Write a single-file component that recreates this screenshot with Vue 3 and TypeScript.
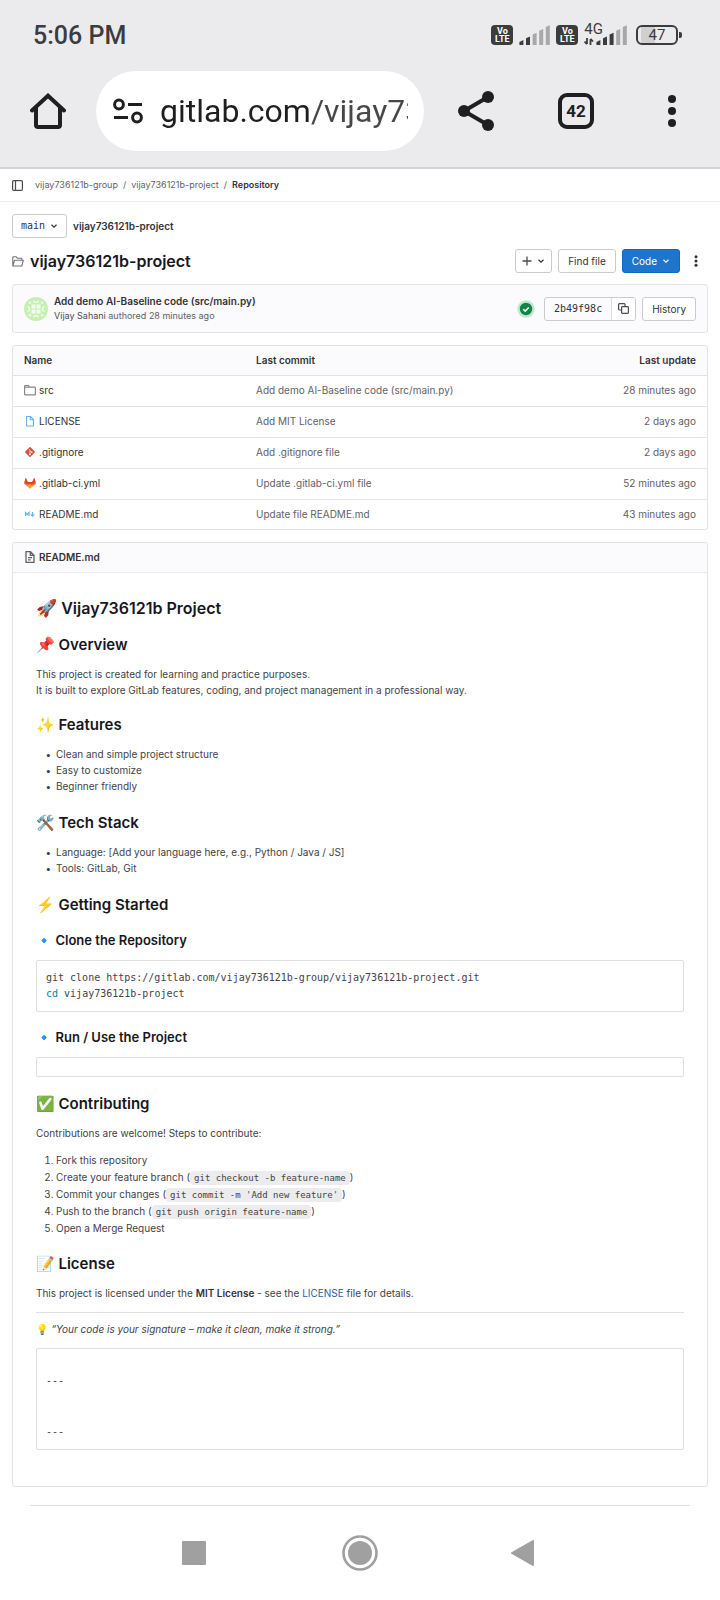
<script setup lang="ts">
import { ref } from 'vue'

interface FileRow {
  name: string
  icon: 'folder' | 'doc' | 'git' | 'gitlab' | 'markdown'
  commit: string
  updated: string
}

const address = ref('gitlab.com/vijay736121b-group/vijay736121b-project')

const files: FileRow[] = [
  { name: 'src', icon: 'folder', commit: 'Add demo AI-Baseline code (src/main.py)', updated: '28 minutes ago' },
  { name: 'LICENSE', icon: 'doc', commit: 'Add MIT License', updated: '2 days ago' },
  { name: '.gitignore', icon: 'git', commit: 'Add .gitignore file', updated: '2 days ago' },
  { name: '.gitlab-ci.yml', icon: 'gitlab', commit: 'Update .gitlab-ci.yml file', updated: '52 minutes ago' },
  { name: 'README.md', icon: 'markdown', commit: 'Update file README.md', updated: '43 minutes ago' },
]

const features = ['Clean and simple project structure', 'Easy to customize', 'Beginner friendly']
const stack = ['Language: [Add your language here, e.g., Python / Java / JS]', 'Tools: GitLab, Git']
const steps: { text: string; code?: string }[] = [
  { text: 'Fork this repository' },
  { text: 'Create your feature branch', code: 'git checkout -b feature-name' },
  { text: 'Commit your changes', code: "git commit -m 'Add new feature'" },
  { text: 'Push to the branch', code: 'git push origin feature-name' },
  { text: 'Open a Merge Request' },
]
const cloneLine = 'git clone https://gitlab.com/vijay736121b-group/vijay736121b-project.git\n'
const trailer = '\n---\n\n\n---'
const signals = [2, 3]
</script>

<template>
  <div class="screen">
    <header class="chrome">
      <div class="status">
        <span class="time">5:06 PM</span>
        <div class="indicators">
          <template v-for="(bars, n) in signals" :key="n">
            <span class="volte"><span>Vo</span><span>LTE</span></span>
            <span v-if="n === 1" class="network">
              <span>4G</span>
              <svg width="10" height="7" viewBox="0 0 10 7"><path d="M3 0v6M.5 3.500 3 6.200M6.500 7V1M6.500.8 9 3.500" /></svg>
            </span>
            <svg class="signal" :class="{ tight: n === 1 }" width="31" height="20" viewBox="0 0 31 20">
              <path v-for="i in 5" :key="i" :class="{ on: i <= bars }" :d="`M${(i - 1) * 6.6 + 0.4} 20v${-(i * 3.700 - 0.600)}l4-1.800v${i * 3.700 + 1.200}z`" />
            </svg>
          </template>
          <span class="battery"><span class="cell">47</span><span class="tip"></span></span>
        </div>
      </div>
      <div class="toolbar">
        <button class="bare" aria-label="Home">
          <svg width="36" height="36" viewBox="0 0 36 36" fill="none" stroke="#1f1f1f" stroke-width="4"><path stroke-linecap="round" d="M2 17.500 18 2.700l16 14.800" /><path stroke-linejoin="round" d="M6 14v18a2 2 0 0 0 2 2h20a2 2 0 0 0 2-2V14" /></svg>
        </button>
        <div class="omnibox">
          <svg width="30" height="26" viewBox="0 0 30 26" fill="none" stroke="#1f1f1f" stroke-width="3"><circle cx="6" cy="6.500" r="4.400" /><path d="M15 6.500h14M1 19.500h14" /><circle cx="24" cy="19.500" r="4.400" /></svg>
          <input v-model="address" type="text" aria-label="Address" />
        </div>
        <div class="actions">
          <button class="bare" aria-label="Share">
            <svg width="36" height="40" viewBox="0 0 36 40" fill="#1f1f1f"><path d="M30 6 6 20l24 14" fill="none" stroke="#1f1f1f" stroke-width="4" /><circle cx="30" cy="6" r="6" /><circle cx="6" cy="20" r="6" /><circle cx="30" cy="34" r="6" /></svg>
          </button>
          <button class="tabs" aria-label="Tabs">42</button>
          <button class="bare" aria-label="Menu">
            <svg width="8" height="32" viewBox="0 0 8 32" fill="#1f1f1f"><circle cx="4" cy="4" r="4" /><circle cx="4" cy="16" r="4" /><circle cx="4" cy="28" r="4" /></svg>
          </button>
        </div>
      </div>
    </header>

    <nav class="crumbs">
      <button class="bare" aria-label="Toggle sidebar">
        <svg width="11" height="11" viewBox="0 0 11 11" fill="none" stroke="#4c4b51"><rect x=".6" y=".6" width="9.800" height="9.800" rx="1.200" stroke-width="1.200" /><path d="M3.500.6v9.800" stroke-width="1.200" /></svg>
      </button>
      <a href="#">vijay736121b-group</a><span>/</span><a href="#">vijay736121b-project</a><span>/</span><b>Repository</b>
    </nav>

    <main>
      <div class="branch">
        <button class="btn mono">main<svg class="chev" viewBox="0 0 8 8"><path d="M1.500 2.800 4 5.200l2.500-2.400" /></svg></button>
        <b>vijay736121b-project</b>
      </div>

      <div class="title">
        <svg width="12" height="11" viewBox="0 0 12 11" fill="none" stroke="#737278"><path d="M.8 10V1.500a.7.7 0 0 1 .7-.7h2.700l1.200 1.400h3.800a.7.7 0 0 1 .7.700v1.300M.8 10l1.700-5.700h8.800L9.800 10z" stroke-width="1.100" stroke-linejoin="round" /></svg>
        <h1>vijay736121b-project</h1>
        <button class="btn slim" aria-label="Add to tree"><svg width="10" height="10" viewBox="0 0 10 10" fill="none" stroke="#4c4b51" stroke-width="1.300"><path d="M5 .5v9M.5 5h9" /></svg><svg class="chev" viewBox="0 0 8 8"><path d="M1.500 2.800 4 5.200l2.500-2.400" /></svg></button>
        <button class="btn">Find file</button>
        <button class="btn primary">Code<svg class="chev" viewBox="0 0 8 8"><path d="M1.500 2.800 4 5.200l2.500-2.400" /></svg></button>
        <button class="bare kebab" aria-label="Actions"><svg width="4" height="12" viewBox="0 0 4 12" fill="#333238"><circle cx="2" cy="1.700" r="1.500" /><circle cx="2" cy="6" r="1.500" /><circle cx="2" cy="10.300" r="1.500" /></svg></button>
      </div>

      <section class="commit">
        <svg width="24" height="24" viewBox="0 0 24 24"><circle cx="12" cy="12" r="12" fill="#c6f0b2" /><path fill="#f4faf1" d="M7.500 7.500h4v4h-4zM12.500 7.500h4v4h-4zM7.500 12.500h4v4h-4zM12.500 12.500h4v4h-4zM9 3l3 2 3-2-1 3h-4zM9 21l3-2 3 2-1-3h-4zM3 9l2 3-2 3 3-1v-4zM21 9l-2 3 2 3-3-1v-4zM4 6l3-2v3zM20 6l-3-2v3zM4 18l3 2v-3zM20 18l-3 2v-3z" /></svg>
        <div class="who">
          <a href="#" class="subject">Add demo AI-Baseline code (src/main.py)</a>
          <p><a href="#">Vijay Sahani</a> authored 28 minutes ago</p>
        </div>
        <svg width="18" height="18" viewBox="0 0 18 18" role="img" aria-label="Pipeline passed"><circle cx="9" cy="9" r="8.700" fill="#c3e6cd" /><circle cx="9" cy="9" r="6.200" fill="#108548" /><path d="m6.200 9.200 2 1.900 3.500-3.600" fill="none" stroke="#fff" stroke-width="1.500" /></svg>
        <div class="sha">
          <span class="mono">2b49f98c</span>
          <button aria-label="Copy commit SHA"><svg width="11" height="11" viewBox="0 0 11 11" fill="none" stroke="#4c4b51" stroke-width="1.200"><rect x="3.600" y="3.600" width="6.800" height="6.800" rx=".8" /><path d="M3.600 7H1.400a.8.800 0 0 1-.8-.8V1.400a.8.800 0 0 1 .8-.8h4.800a.8.800 0 0 1 .8.800v2.200" /></svg></button>
        </div>
        <button class="btn">History</button>
      </section>

      <div class="tree">
        <table>
          <thead><tr><th>Name</th><th>Last commit</th><th>Last update</th></tr></thead>
          <tbody>
            <tr v-for="f in files" :key="f.name">
              <td>
                <a href="#" class="file">
                  <svg width="12" height="12" viewBox="0 0 12 12" fill="none">
                    <path v-if="f.icon === 'folder'" d="M.6 10.200V2.200a.7.700 0 0 1 .7-.7h3l1.300 1.700h5.100a.7.700 0 0 1 .7.700v6.300a.6.600 0 0 1-.6.600H1.200a.6.600 0 0 1-.6-.6zM.6 3.200h5" stroke="#89888d" stroke-width="1.200" />
                    <path v-if="f.icon === 'doc'" d="M2.500 1.500h4L9.500 4.500v6.500h-7zM6.300 1.500v3.200h3.200" stroke="#63b3ee" stroke-width="1.100" />
                    <template v-if="f.icon === 'git'"><rect x="2.300" y="2.300" width="7.400" height="7.400" rx=".7" transform="rotate(45 6 6)" fill="#dd4c35" /><path d="M4.800 3 6 4.300v4M6.200 4.700 7.700 6.200" stroke="#fff" stroke-width=".7" /><circle cx="6" cy="8.300" r=".9" fill="#fff" /><circle cx="7.800" cy="6.200" r=".8" fill="#fff" /></template>
                    <template v-if="f.icon === 'gitlab'"><path fill="#fc6d26" d="M0 6.400 1.800.8l2 4.200h4.400l2-4.200L12 6.400 6 11.600z" /><path fill="#e24329" d="M.3 5.500 1.800.8 3.800 5h4.400l2-4.200 1.500 4.700L6 8.600z" /><path fill="#fca326" d="m2.700 8.700 3.300-2 3.300 2L6 11.600z" /></template>
                    <path v-if="f.icon === 'markdown'" d="M1.500 8V4.500L3.300 6.600 5 4.500V8M8.500 4v4M6.800 6.300l1.700 1.900 1.700-1.900" stroke="#63b3ee" stroke-width="1.200" />
                  </svg>{{ f.name }}
                </a>
              </td>
              <td><a href="#">{{ f.commit }}</a></td>
              <td>{{ f.updated }}</td>
            </tr>
          </tbody>
        </table>
      </div>

      <article class="readme">
        <div class="bar">
          <svg width="12" height="12" viewBox="0 0 12 12" fill="none" stroke="#626168" stroke-width="1.300"><path d="M2 .7h4.500L10 4.200v7.100H2zM6.300.7v3.700H10M4 6.600h4M4 8.800h2.600" /></svg>
          <b>README.md</b>
        </div>
        <div class="doc">
          <h1><span class="emoji">🚀</span> Vijay736121b Project</h1>
          <h2><span class="emoji">📌</span> Overview</h2>
          <p>This project is created for learning and practice purposes.<br />It is built to explore GitLab features, coding, and project management in a professional way.</p>
          <h2><span class="emoji">✨</span> Features</h2>
          <ul><li v-for="t in features" :key="t">{{ t }}</li></ul>
          <h2><span class="emoji">🛠️</span> Tech Stack</h2>
          <ul><li v-for="t in stack" :key="t">{{ t }}</li></ul>
          <h2><span class="emoji">⚡</span> Getting Started</h2>
          <h3><span class="emoji">🔹</span> Clone the Repository</h3>
          <pre><code>{{ cloneLine }}<span class="builtin">cd</span> vijay736121b-project</code></pre>
          <h3><span class="emoji">🔹</span> Run / Use the Project</h3>
          <pre><code></code></pre>
          <h2><span class="emoji">✅</span> Contributing</h2>
          <p>Contributions are welcome! Steps to contribute:</p>
          <ol>
            <li v-for="s in steps" :key="s.text">{{ s.text }}<template v-if="s.code"> (<code>{{ s.code }}</code>)</template></li>
          </ol>
          <h2><span class="emoji">📝</span> License</h2>
          <p>This project is licensed under the <b>MIT License</b> - see the <a href="#">LICENSE</a> file for details.</p>
          <hr />
          <p><span class="emoji">💡</span> <em>“Your code is your signature – make it clean, make it strong.”</em></p>
          <pre class="trailer"><code>{{ trailer }}</code></pre>
        </div>
      </article>
      <hr class="end" />
    </main>

    <footer class="sysnav">
      <button class="bare" aria-label="Recent apps"><svg width="36" height="36" viewBox="0 0 36 36" fill="#a0a0a0"><rect x="6" y="6" width="24" height="24" rx="1" /></svg></button>
      <button class="bare" aria-label="Home screen"><svg width="36" height="36" viewBox="0 0 36 36" fill="#a0a0a0"><circle cx="18" cy="18" r="12" /><circle cx="18" cy="18" r="16.500" fill="none" stroke="#a0a0a0" stroke-width="2.600" /></svg></button>
      <button class="bare" aria-label="Back"><svg width="36" height="36" viewBox="0 0 36 36" fill="#a0a0a0" stroke="#a0a0a0" stroke-width="2" stroke-linejoin="round"><path d="M4 18 25 6v24z" /></svg></button>
    </footer>
  </div>
</template>

<style>
body { background: #fff; }
</style>

<style scoped>
* { box-sizing: border-box; }
.screen { min-height: 100vh; display: flex; flex-direction: column; font: 10px/16px Inter, "Liberation Sans", sans-serif; color: #4c4b51; }
svg { display: block; flex: none; }
a { color: inherit; text-decoration: none; }
b { font-weight: 600; color: #333238; }
button { font: inherit; color: #333238; margin: 0; cursor: pointer; }
.bare { border: 0; background: none; padding: 0; display: flex; }
.mono, code { font-family: "DejaVu Sans Mono", "Liberation Mono", monospace; }

.chrome { background: #ebebed; border-bottom: 2px solid #d3d3d5; font-family: Roboto, sans-serif; padding-bottom: 16px; }
.status { display: flex; justify-content: space-between; align-items: center; height: 71px; padding: 0 38px 0 33px; }
.time { font-size: 25px; line-height: 32px; font-weight: 500; color: #3c3c3e; }
.indicators { display: flex; align-items: flex-end; gap: 6px; height: 22px; margin-bottom: 4px; }
.volte { width: 22px; height: 20px; border-radius: 4px; background: #3c3c3c; color: #fff; font: 700 9px/8px Roboto, sans-serif; padding: 2px 0; display: flex; flex-direction: column; align-items: center; }
.signal path { fill: #a8a8aa; }
.signal .on { fill: #3c3c3c; }
.signal.tight { margin-left: -9px; }
.network { display: flex; flex-direction: column; gap: 2px; font-size: 15px; line-height: 14px; color: #3c3c3c; margin-right: -4px; }
.network svg path { fill: none; stroke: #3c3c3c; stroke-width: 1.800; }
.battery { display: flex; align-items: center; gap: 1px; margin-left: 3px; }
.cell { width: 42px; height: 20px; border: 2px solid #3c3c3c; border-radius: 6px; font-size: 15px; line-height: 16px; text-align: center; color: #3c3c3c; background: linear-gradient(90deg, #d0d0d2 45%, transparent 45%) content-box; padding: 0 3px; }
.tip { width: 3px; height: 6px; border-radius: 0 2px 2px 0; background: #3c3c3c; }
.toolbar { display: flex; align-items: center; height: 80px; padding: 0 44px 0 30px; gap: 30px; }
.omnibox { display: flex; align-items: center; gap: 17px; flex: 1; min-width: 0; height: 80px; border-radius: 40px; background: #fff; padding: 0 16px 0 17px; }
.omnibox input { flex: 1; min-width: 0; border: 0; padding: 0; outline: 0; font: 32px/40px Roboto, sans-serif; color: transparent; background: linear-gradient(90deg, #1f1f1f 149px, #474747 149px); background-clip: text; -webkit-background-clip: text; }
.actions { display: flex; align-items: center; justify-content: space-between; flex: 0 0 218px; margin-left: 4px; }
.tabs { width: 36px; height: 36px; border: 4px solid #1f1f1f; border-radius: 9px; background: none; padding: 0; font: 700 17px/28px Roboto, sans-serif; color: #1f1f1f; margin-right: 10px; }

.crumbs { display: flex; align-items: center; height: 33px; border-bottom: 1px solid #ececef; padding: 0 12px; font-size: 9px; color: #626168; gap: 5px; }
.crumbs .bare { margin-right: 7px; }
main { padding: 12px; }
.branch { display: flex; align-items: center; gap: 6px; font-size: 10px; }
.btn { height: 24px; border: 1px solid #cbcbcf; border-radius: 3px; background: #fff; padding: 0 9px; display: flex; align-items: center; gap: 5px; }
.branch .btn { padding: 0 8px; }
.btn.slim { padding: 0 6px; }
.chev { width: 8px; height: 8px; fill: none; stroke: currentColor; stroke-width: 1.200; }
.btn.primary { background: #1f75cb; border-color: #1068bf; color: #fff; }
.title { display: flex; align-items: center; gap: 6px; margin-top: 11px; }
.title h1 { flex: 1; margin: 0; font-size: 16px; line-height: 24px; font-weight: 600; color: #18171d; }
.kebab { width: 20px; justify-content: center; margin-right: 2px; }
.commit { margin-top: 11px; height: 49px; border: 1px solid #e3e3e6; border-radius: 3px; background: #fbfafd; display: flex; align-items: center; gap: 6px; padding: 0 11px; }
.who { flex: 1; display: flex; flex-direction: column; }
.subject { font-weight: 600; color: #333238; line-height: 15px; }
.who p { margin: 0; font-size: 9px; line-height: 14px; color: #626168; }
.who p a { color: #4c4b51; }
.sha { display: flex; height: 24px; border: 1px solid #cbcbcf; border-radius: 3px; margin-left: 3px; line-height: 22px; }
.sha span { padding: 0 9px; color: #333238; }
.sha button { border: 0; border-left: 1px solid #dcdcde; background: #fff; padding: 0 6px; display: flex; align-items: center; border-radius: 0 2px 2px 0; }

.tree { margin-top: 12px; border: 1px solid #e3e3e6; border-radius: 3px; overflow: hidden; }
table { width: 100%; border-collapse: separate; border-spacing: 0; table-layout: fixed; }
th, td { padding: 0 11px 2px; border-bottom: 1px solid #e3e3e6; }
th { height: 30px; background: #fbfafd; font-weight: 600; color: #333238; text-align: left; }
td { height: 31px; color: #626168; }
tbody tr:last-child td { height: 29px; border-bottom: 0; }
th:first-child { width: 232px; }
th:last-child, td:last-child { text-align: right; }
th:last-child { width: 220px; }
.file { display: flex; align-items: center; gap: 3px; color: #333238; }

.readme { margin-top: 12px; border: 1px solid #e3e3e6; border-radius: 3px; }
.bar { display: flex; align-items: center; gap: 3px; height: 30px; padding: 0 11px 2px; background: #fbfafd; border-bottom: 1px solid #ececef; border-radius: 3px 3px 0 0; }
.doc { padding: 23px 23px 36px; color: #434248; }
.doc h1, .doc h2, .doc h3 { color: #18171d; font-weight: 600; }
.doc h1 { font-size: 16px; line-height: 24px; margin: 0 0 15px; }
.doc h1 .emoji { font-size: 17px; line-height: 20px; }
.doc h2 { font-size: 15px; line-height: 20px; margin: 17px 0 11px; }
.doc h1 + h2 { margin-top: 15px; }
.doc h3 { font-size: 13px; line-height: 18px; margin: 16px 0 10px; }
.doc p { margin: 0 0 11px; }
.doc ul, .doc ol { margin: 0; padding-left: 20px; }
.doc ul { margin-bottom: 19px; list-style-type: "•\2002"; }
.doc ol li { line-height: 17px; }
.doc pre { margin: 0; border: 1px solid #dfdfe2; border-radius: 2px; padding: 9px; min-height: 19px; line-height: 16px; }
.doc .trailer { line-height: 17px; padding-top: 6px; }
.doc pre code { font-size: 10px; }
.doc li code { font-size: 9px; line-height: 9px; background: #ececef; border-radius: 4px; padding: 2px 4px; }
.doc p a { color: #2f5ca0; }
.doc hr, .end { border: 0; border-top: 1px solid #dfdfe2; margin: 11px 0 8px; }
.doc hr + p { margin-bottom: 10px; }
main .end { margin: 18px 18px 0; }
.builtin { color: #0086b3; }
.emoji { font-family: "Noto Color Emoji", Inter, sans-serif; }

.sysnav { display: flex; align-items: center; justify-content: center; gap: 130px; padding: 17px 0 30px; }
</style>
